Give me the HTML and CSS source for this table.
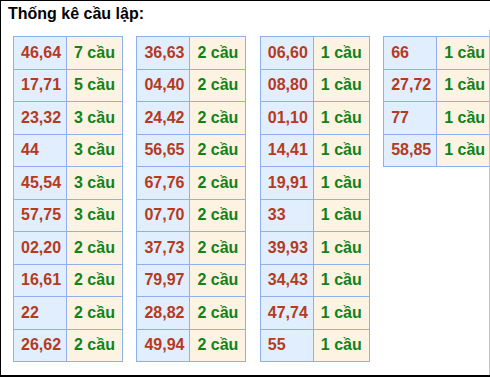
FILE: index.html
```html
<!DOCTYPE html>
<html lang="vi">
<head>
<meta charset="utf-8">
<title>Thống kê cầu lập</title>
<link rel="stylesheet" href="styles.css">
</head>
<body>
<div class="box">
  <div class="title">Thống kê cầu lập:</div>
  <div class="tables">
    <table class="stat">
      <colgroup><col class="c1"><col class="c2"></colgroup>
      <tr><td class="num">46,64</td><td class="cnt">7 cầu</td></tr>
      <tr><td class="num">17,71</td><td class="cnt">5 cầu</td></tr>
      <tr><td class="num">23,32</td><td class="cnt">3 cầu</td></tr>
      <tr><td class="num">44</td><td class="cnt">3 cầu</td></tr>
      <tr><td class="num">45,54</td><td class="cnt">3 cầu</td></tr>
      <tr><td class="num">57,75</td><td class="cnt">3 cầu</td></tr>
      <tr><td class="num">02,20</td><td class="cnt">2 cầu</td></tr>
      <tr><td class="num">16,61</td><td class="cnt">2 cầu</td></tr>
      <tr><td class="num">22</td><td class="cnt">2 cầu</td></tr>
      <tr><td class="num">26,62</td><td class="cnt">2 cầu</td></tr>
    </table>
    <table class="stat">
      <colgroup><col class="c1"><col class="c2"></colgroup>
      <tr><td class="num">36,63</td><td class="cnt">2 cầu</td></tr>
      <tr><td class="num">04,40</td><td class="cnt">2 cầu</td></tr>
      <tr><td class="num">24,42</td><td class="cnt">2 cầu</td></tr>
      <tr><td class="num">56,65</td><td class="cnt">2 cầu</td></tr>
      <tr><td class="num">67,76</td><td class="cnt">2 cầu</td></tr>
      <tr><td class="num">07,70</td><td class="cnt">2 cầu</td></tr>
      <tr><td class="num">37,73</td><td class="cnt">2 cầu</td></tr>
      <tr><td class="num">79,97</td><td class="cnt">2 cầu</td></tr>
      <tr><td class="num">28,82</td><td class="cnt">2 cầu</td></tr>
      <tr><td class="num">49,94</td><td class="cnt">2 cầu</td></tr>
    </table>
    <table class="stat">
      <colgroup><col class="c1"><col class="c2"></colgroup>
      <tr><td class="num">06,60</td><td class="cnt">1 cầu</td></tr>
      <tr><td class="num">08,80</td><td class="cnt">1 cầu</td></tr>
      <tr><td class="num">01,10</td><td class="cnt">1 cầu</td></tr>
      <tr><td class="num">14,41</td><td class="cnt">1 cầu</td></tr>
      <tr><td class="num">19,91</td><td class="cnt">1 cầu</td></tr>
      <tr><td class="num">33</td><td class="cnt">1 cầu</td></tr>
      <tr><td class="num">39,93</td><td class="cnt">1 cầu</td></tr>
      <tr><td class="num">34,43</td><td class="cnt">1 cầu</td></tr>
      <tr><td class="num">47,74</td><td class="cnt">1 cầu</td></tr>
      <tr><td class="num">55</td><td class="cnt">1 cầu</td></tr>
    </table>
    <table class="stat">
      <colgroup><col class="c1"><col class="c2"></colgroup>
      <tr><td class="num">66</td><td class="cnt">1 cầu</td></tr>
      <tr><td class="num">27,72</td><td class="cnt">1 cầu</td></tr>
      <tr><td class="num">77</td><td class="cnt">1 cầu</td></tr>
      <tr><td class="num">58,85</td><td class="cnt">1 cầu</td></tr>
    </table>
  </div>
</div>
</body>
</html>
```
FILE: styles.css
```css
html, body {
  margin: 0;
  padding: 0;
  background: #ffffff;
  overflow: hidden;
}
body {
  font-family: "Liberation Sans", Arial, sans-serif;
  width: 490px;
  height: 377px;
}
.box {
  box-sizing: border-box;
  width: 490px;
  height: 377px;
  border-top: 1px solid #000;
  border-left: 1px solid #000;
  border-bottom: 2px solid #000;
  display: flex;
  flex-direction: column;
}
.title {
  height: 29px;
  padding-left: 7px;
  font-size: 16px;
  font-weight: bold;
  line-height: 26px;
  color: #000;
}
.tables {
  flex: 1;
  display: flex;
  align-items: flex-start;
  gap: 13.4px;
  padding: 6px 0 0 12px;
  border-right: 1px solid #c4c4c4;
  overflow: hidden;
}
.stat {
  flex-shrink: 0;
  width: 109px;
  border-collapse: collapse;
  table-layout: fixed;
}
.stat .c1 {
  width: 53px;
}
.stat .c2 {
  width: 56px;
}
.stat tr {
  height: 32.5px;
}
.stat td {
  border: 1px solid #8fb0ee;
  padding: 0 0 0 7px;
  font-size: 16px;
  font-weight: bold;
  white-space: nowrap;
  overflow: hidden;
  vertical-align: middle;
}
.stat .num {
  background: #e1eefd;
  color: #b53a1e;
}
.stat .cnt {
  background: #fdf3e2;
  color: #11821a;
}
```
